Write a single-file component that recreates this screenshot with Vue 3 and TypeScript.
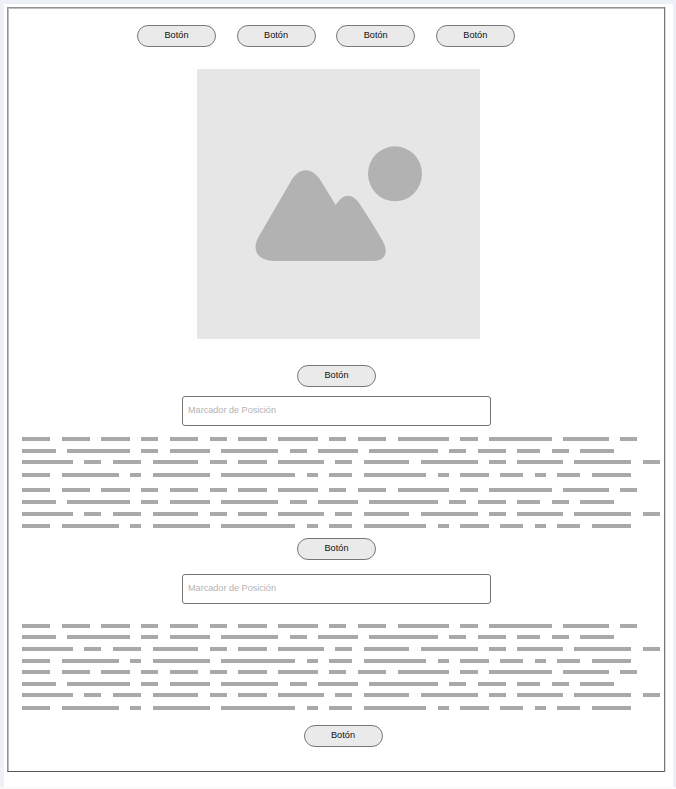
<script setup lang="ts">
type Line = { top: number; words: number[] }

const menu: string[] = ['Botón', 'Botón', 'Botón', 'Botón']

// Word lengths, in characters, of the four placeholder lines.
const copy: number[][] = [
  [5, 5, 5, 3, 5, 3, 5, 7, 3, 5, 9, 3, 11, 8, 3],
  [6, 11, 3, 7, 10, 3, 7, 12, 3, 5, 4, 3, 6],
  [9, 3, 5, 8, 3, 5, 8, 3, 8, 10, 3, 8, 10, 3],
  [5, 10, 2, 10, 13, 2, 4, 11, 2, 5, 4, 2, 4, 7],
]

const charWidth = 5.7

// Space above each line; the copy repeats every four lines.
function lines(spaces: number[]): Line[] {
  return spaces.map((top, i) => ({ top, words: copy[i % copy.length] }))
}

const first = lines([0, 8, 7, 9, 11, 8, 8, 8])
const second = lines([0, 7, 8, 8, 7, 8, 7, 9])
</script>

<template>
  <div class="page">
    <main class="sheet">
      <div class="frame">
        <nav class="menu">
          <button v-for="(label, i) in menu" :key="i" class="pill">{{ label }}</button>
        </nav>

        <svg class="picture" viewBox="0 0 283 270">
          <rect class="backdrop" width="283" height="270" />
          <ellipse class="shape" cx="198" cy="104.8" rx="27" ry="27.5" />
          <path
            class="shape"
            d="M93 113.7C101.5 97 116 97 125 113.7L138.7 136C146.5 124 155 124 162.3 134.3Q174 152 184.7 170.3C193 184 187.500 191.900 176.3 191.9H78C60 191.900 54.5 181 61.500 168Z"
          />
        </svg>

        <button class="pill after-picture">Botón</button>
        <input class="field" type="text" placeholder="Marcador de Posición" />

        <div class="copy first">
          <div v-for="(line, i) in first" :key="i" class="line" :style="{ marginTop: line.top + 'px' }">
            <span v-for="(n, j) in line.words" :key="j" class="word" :style="{ width: n * charWidth + 'px' }"></span>
          </div>
        </div>

        <button class="pill after-copy">Botón</button>
        <input class="field spaced" type="text" placeholder="Marcador de Posición" />

        <div class="copy second">
          <div v-for="(line, i) in second" :key="i" class="line" :style="{ marginTop: line.top + 'px' }">
            <span v-for="(n, j) in line.words" :key="j" class="word" :style="{ width: n * charWidth + 'px' }"></span>
          </div>
        </div>

        <button class="pill last">Botón</button>
      </div>
    </main>
  </div>
</template>

<style>
body {
  background: #fbfbfc;
}
</style>

<style scoped>
.page {
  box-sizing: border-box;
  width: 676px;
  height: 787px;
  padding: 4px 3px 0 4px;
  background: #edf1f7;
  font-family: "Liberation Sans", Arial, sans-serif;
}

.sheet {
  box-sizing: border-box;
  height: 783px;
  padding: 3px 7px 0 3px;
  background: #fff;
}

.frame {
  box-sizing: border-box;
  display: flex;
  flex-direction: column;
  align-items: flex-start;
  width: 658px;
  height: 765px;
  border: 1px solid #949494;
  border-right-color: #777;
  border-bottom-color: #555;
  box-shadow: inset 1px 1px 0 #bebebe, 1px 0 0 #dedede;
}

.menu {
  display: flex;
  gap: 20.6px;
  margin: 17px 0 0 129px;
}

.pill {
  box-sizing: border-box;
  flex: none;
  width: 79px;
  height: 22px;
  padding: 0 0 2px;
  border: 1px solid #777;
  border-radius: 11px;
  background: #eaeaea;
  color: #111;
  font-family: inherit;
  font-size: 9.2px;
  line-height: 18px;
  text-align: center;
}

.picture {
  flex: none;
  display: block;
  width: 283px;
  height: 270px;
  margin: 22px 0 0 189px;
}

.backdrop {
  fill: #e6e6e6;
}

.shape {
  fill: #b2b2b2;
}

.after-picture {
  margin: 26px 0 0 289px;
}

.field {
  box-sizing: border-box;
  flex: none;
  width: 309px;
  height: 30px;
  margin: 9px 0 0 174px;
  padding: 0 5px 3px;
  border: 1px solid #747474;
  border-radius: 3px;
  background: #fff;
  font-family: inherit;
  font-size: 9.1px;
  outline: none;
}

.field::placeholder {
  color: #b5b3b1;
  opacity: 1;
}

.copy {
  flex: none;
  margin-left: 13.7px;
}

.line {
  display: flex;
  gap: 11.4px;
  height: 4px;
}

.word {
  flex: none;
  background: #a9a9a9;
}

.first {
  margin-top: 11px;
}

.after-copy {
  margin: 10px 0 0 289px;
}

.spaced {
  margin-top: 14px;
}

.second {
  margin-top: 20px;
}

.last {
  margin: 15px 0 0 295.5px;
}
</style>
